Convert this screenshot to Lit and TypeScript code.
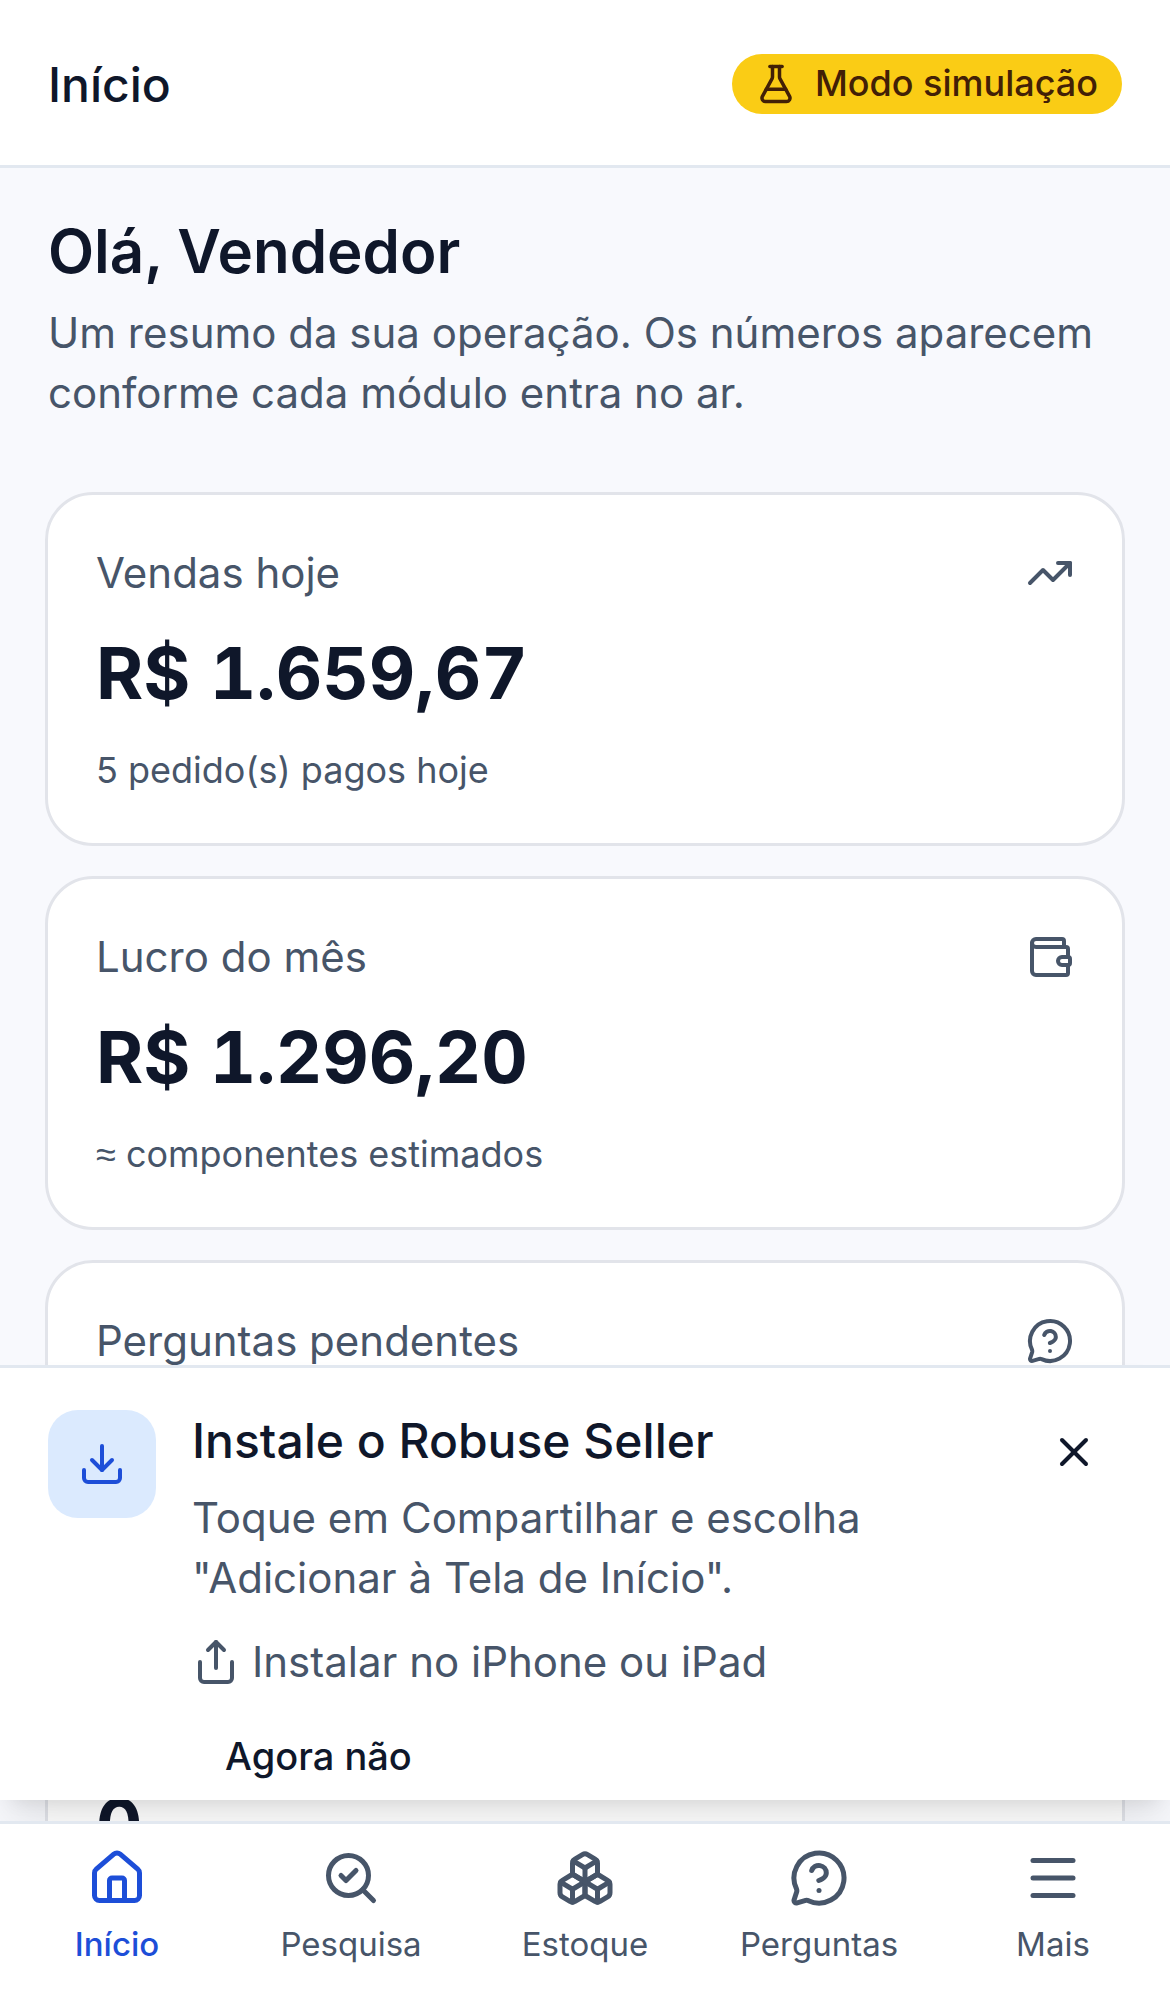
import { LitElement, html, css, svg, nothing } from "lit";
import { customElement } from "lit/decorators.js";

const icons: Record<string, unknown> = {
  trending: svg`<path d="M16 7h6v6"/><path d="m22 7-8.5 8.5-5-5L2 17"/>`,
  wallet: svg`<path d="M19 7V4a1 1 0 0 0-1-1H5a2 2 0 0 0 0 4h15a1 1 0 0 1 1 1v4h-3a2 2 0 0 0 0 4h3a1 1 0 0 0 1-1v-2a1 1 0 0 0-1-1"/><path d="M3 5v14a2 2 0 0 0 2 2h15a1 1 0 0 0 1-1v-4"/>`,
  question: svg`<path d="M2.992 16.342a2 2 0 0 1 .094 1.167l-1.065 3.29a1 1 0 0 0 1.236 1.168l3.413-.998a2 2 0 0 1 1.099.092 10 10 0 1 0-4.777-4.719"/><path d="M9.09 9a3 3 0 0 1 5.83 1c0 2-3 3-3 3"/><path d="M12 17h.01"/>`,
  flask: svg`<path d="M14 2v6a2 2 0 0 0 .245.96l5.51 10.08A2 2 0 0 1 18 22H6a2 2 0 0 1-1.755-2.96l5.51-10.08A2 2 0 0 0 10 8V2"/><path d="M6.453 15h11.094"/><path d="M8.5 2h7"/>`,
  download: svg`<path d="M12 15V3"/><path d="M21 15v4a2 2 0 0 1-2 2H5a2 2 0 0 1-2-2v-4"/><path d="m7 10 5 5 5-5"/>`,
  share: svg`<path d="M12 2v13"/><path d="m16 6-4-4-4 4"/><path d="M4 12v8a2 2 0 0 0 2 2h12a2 2 0 0 0 2-2v-8"/>`,
  x: svg`<path d="M18 6 6 18"/><path d="m6 6 12 12"/>`,
  house: svg`<path d="M15 21v-8a1 1 0 0 0-1-1h-4a1 1 0 0 0-1 1v8"/><path d="M3 10a2 2 0 0 1 .709-1.528l7-6a2 2 0 0 1 2.582 0l7 6A2 2 0 0 1 21 10v9a2 2 0 0 1-2 2H5a2 2 0 0 1-2-2z"/>`,
  search: svg`<path d="m8 11 2 2 4-4"/><circle cx="11" cy="11" r="8"/><path d="m21 21-4.3-4.3"/>`,
  boxes: svg`<path d="M2.97 12.92A2 2 0 0 0 2 14.63v3.24a2 2 0 0 0 .97 1.71l3 1.8a2 2 0 0 0 2.06 0L12 19v-5.5l-5-3-4.03 2.42Z"/><path d="m7 16.5-4.74-2.85"/><path d="m7 16.5 5-3"/><path d="M7 16.5v5.17"/><path d="M12 13.5V19l3.97 2.38a2 2 0 0 0 2.06 0l3-1.8a2 2 0 0 0 .97-1.71v-3.24a2 2 0 0 0-.97-1.71L17 10.5l-5 3Z"/><path d="m17 16.5-5-3"/><path d="m17 16.5 4.74-2.85"/><path d="M17 16.5v5.17"/><path d="M7.97 4.42A2 2 0 0 0 7 6.13v4.37l5 3 5-3V6.13a2 2 0 0 0-.97-1.71l-3-1.8a2 2 0 0 0-2.06 0l-3 1.8Z"/><path d="M12 8 7.26 5.15"/><path d="m12 8 4.74-2.85"/><path d="M12 13.5V8"/>`,
  menu: svg`<path d="M4 5h16"/><path d="M4 12h16"/><path d="M4 19h16"/>`,
};

const icon = (name: string) => html`<svg class="ico" viewBox="0 0 24 24" fill="none" stroke="currentColor" stroke-width="2" stroke-linecap="round" stroke-linejoin="round">${icons[name]}</svg>`;

const cards = [
  { label: "Vendas hoje", value: "R$ 1.659,67", sub: html`5 pedido(s) pagos hoje`, icon: "trending" },
  { label: "Lucro do mês", value: "R$ 1.296,20", sub: html`<span class="approx">≈</span> componentes estimados`, icon: "wallet" },
  { label: "Perguntas pendentes", value: "", sub: nothing, icon: "question" },
  { label: "", value: "0", sub: nothing, icon: "" },
];

const navItems = [
  { label: "Início", icon: "house", active: true },
  { label: "Pesquisa", icon: "search", active: false },
  { label: "Estoque", icon: "boxes", active: false },
  { label: "Perguntas", icon: "question", active: false },
  { label: "Mais", icon: "menu", active: false },
];

@customElement("app-root")
export class AppRoot extends LitElement {
  static styles = css`
    :host {
      display: block;
      position: relative;
      width: 1170px;
      height: 1992px;
      overflow: hidden;
      background: #f8f9fd;
      color: #0f172a;
      font-family: Inter, "Noto Sans", sans-serif;
    }
    * { box-sizing: border-box; }
    .ico { display: block; width: 48px; height: 48px; flex: none; }
    .header {
      height: 168px;
      background: #fff;
      border-bottom: 3px solid #e2e8f0;
      padding: 3px 48px 0;
      display: flex;
      align-items: center;
      justify-content: space-between;
    }
    .title { margin: 0; padding-top: 1px; font-size: 48px; line-height: 60px; font-weight: 500; }
    .badge {
      height: 60px;
      border-radius: 30px;
      background: #facc15;
      color: #422006;
      display: flex;
      align-items: center;
      gap: 18px;
      padding: 0 24px 0 23px;
      font-size: 36px;
      font-weight: 500;
      line-height: 48px;
    }
    .badge span { padding-bottom: 2px; }
    .badge .ico { width: 42px; height: 42px; }
    .main { padding: 41px 48px 0; }
    h2 { margin: 0; font-size: 60px; line-height: 84px; font-weight: 600; }
    .intro { margin: 10px 0 0; font-size: 42px; line-height: 60px; color: #475569; }
    .cards { margin: 69px -3px 0; display: flex; flex-direction: column; gap: 30px; }
    .card {
      height: 354px;
      background: #fff;
      border: 3px solid #e2e4ea;
      border-radius: 48px;
      padding: 48px;
    }
    .card-top { height: 60px; display: flex; align-items: flex-start; justify-content: space-between; color: #475569; }
    .card-label { font-size: 42px; line-height: 60px; }
    .card-top .ico { margin-top: 6px; }
    .value { margin-top: 22px; font-size: 72px; line-height: 96px; font-weight: 700; font-variant-numeric: tabular-nums; }
    .sub { margin-top: 25px; font-size: 36px; line-height: 48px; color: #475569; }
    .approx { font-family: "Liberation Sans", sans-serif; }
    .banner {
      position: absolute;
      left: 0;
      right: 0;
      top: 1365px;
      height: 435px;
      background: #fff;
      border-top: 3px solid #e2e8f0;
      padding: 42px 48px 0;
      display: flex;
      gap: 36px;
      box-shadow: 0 30px 45px -9px rgba(0, 0, 0, 0.1), 0 12px 18px -12px rgba(0, 0, 0, 0.1);
    }
    .dl {
      width: 108px;
      height: 108px;
      flex: none;
      border-radius: 30px;
      background: #dbeafe;
      color: #1d4ed8;
      display: flex;
      align-items: center;
      justify-content: center;
    }
    .b-body { flex: 1; min-width: 0; }
    .b-title { font-size: 48px; line-height: 60px; font-weight: 500; padding-top: 1px; }
    .b-desc { margin-top: 17px; font-size: 42px; line-height: 60px; color: #475569; }
    .b-share { margin-top: 24px; display: flex; align-items: center; gap: 12px; font-size: 42px; line-height: 60px; color: #475569; }
    .later {
      margin-top: 28px;
      display: block;
      height: 72px;
      padding: 0 33px;
      border: 0;
      background: none;
      font: 500 38px/72px Inter, sans-serif;
      color: #0f172a;
    }
    .close {
      width: 96px;
      height: 96px;
      flex: none;
      border: 0;
      background: none;
      padding: 0;
      color: #0f172a;
      display: flex;
      align-items: center;
      justify-content: center;
      margin-top: -6px;
    }
    .nav {
      position: absolute;
      left: 0;
      right: 0;
      bottom: 0;
      height: 171px;
      background: #fff;
      border-top: 3px solid #e2e8f0;
      display: grid;
      grid-template-columns: repeat(5, 1fr);
    }
    .nav-item {
      display: flex;
      flex-direction: column;
      align-items: center;
      padding-top: 24px;
      gap: 15px;
      color: #475569;
      font-size: 33px;
      line-height: 42px;
      font-weight: 400;
    }
    .nav-item .ico { width: 60px; height: 60px; }
    .nav-item.active { color: #1d4ed8; font-weight: 500; }
  `;

  render() {
    return html`
      <header class="header">
        <h1 class="title">Início</h1>
        <div class="badge">${icon("flask")}<span>Modo simulação</span></div>
      </header>
      <main class="main">
        <h2>Olá, Vendedor</h2>
        <p class="intro">Um resumo da sua operação. Os números aparecem conforme cada módulo entra no ar.</p>
        <div class="cards">
          ${cards.map(
            (c) => html`<section class="card">
              <div class="card-top"><span class="card-label">${c.label}</span>${c.icon ? icon(c.icon) : nothing}</div>
              ${c.value ? html`<div class="value">${c.value}</div>` : nothing}
              ${c.sub === nothing ? nothing : html`<div class="sub">${c.sub}</div>`}
            </section>`
          )}
        </div>
      </main>
      <aside class="banner">
        <div class="dl">${icon("download")}</div>
        <div class="b-body">
          <div class="b-title">Instale o Robuse Seller</div>
          <div class="b-desc">Toque em Compartilhar e escolha<br />"Adicionar à Tela de Início".</div>
          <div class="b-share">${icon("share")}<span>Instalar no iPhone ou iPad</span></div>
          <button class="later">Agora não</button>
        </div>
        <button class="close" aria-label="Fechar">${icon("x")}</button>
      </aside>
      <nav class="nav">
        ${navItems.map(
          (n) => html`<div class="nav-item ${n.active ? "active" : ""}">${icon(n.icon)}<span>${n.label}</span></div>`
        )}
      </nav>
    `;
  }
}
